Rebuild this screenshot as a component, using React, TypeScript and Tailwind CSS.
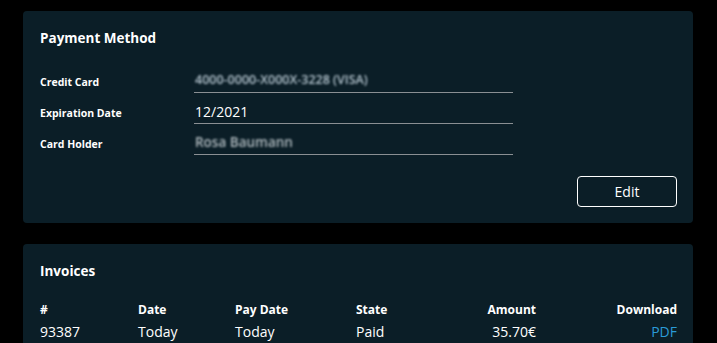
import React from "react";

const Row = ({ label, children }: { label: string; children: React.ReactNode }) => (
  <div className="flex items-center h-[24px]">
    <div className="w-[154px] text-[10.5px] font-bold text-white leading-none pt-[3px]">{label}</div>
    <div className="w-[319px] h-[24px] border-b border-[#8a8f93] flex items-center pl-[1px]">{children}</div>
  </div>
);

export default function App() {
  return (
    <div
      className="h-[343px] overflow-hidden w-full bg-black pt-[11px]"
      style={{ fontFamily: '"Open Sans", "Noto Sans", sans-serif' }}
    >
      <div className="ml-[23px] w-[670px] rounded-[4px] bg-[#0b1e27] pl-[17px] pr-[16px] pt-[17px] pb-[16px]">
        <div className="text-[13.5px] font-bold text-white leading-[20px]">Payment Method</div>
        <div className="mt-[21px] flex flex-col gap-[7px]">
          <Row label="Credit Card">
            <span className="text-[12.5px] font-semibold text-[#b4c4ce] blur-[1px]">4000-0000-X000X-3228 (VISA)</span>
          </Row>
          <Row label="Expiration Date">
            <span className="text-[14px] text-white">12/2021</span>
          </Row>
          <Row label="Card Holder">
            <span className="text-[13.5px] font-semibold text-[#b0babf] blur-[1px]">Rosa Baumann</span>
          </Row>
        </div>
        <div className="mt-[21px] flex justify-end">
          <button className="w-[100px] h-[31px] rounded-[4px] border border-white text-[14px] text-white bg-transparent">
            Edit
          </button>
        </div>
      </div>

      <div className="ml-[23px] mt-[21px] w-[670px] rounded-t-[4px] bg-[#0b1e27] pl-[17px] pr-[16px] pt-[17px] pb-[20px]">
        <div className="text-[13.5px] font-bold text-white leading-[20px]">Invoices</div>
        <div className="mt-[21px] flex text-[12px] font-bold text-white leading-[16px]">
          <div className="w-[98px]">#</div>
          <div className="w-[97px]">Date</div>
          <div className="w-[121px]">Pay Date</div>
          <div className="w-[80px]">State</div>
          <div className="w-[100px] text-right">Amount</div>
          <div className="w-[141px] text-right">Download</div>
        </div>
        <div className="mt-[4px] flex text-[14px] text-white leading-[20px]">
          <div className="w-[98px]">93387</div>
          <div className="w-[97px]">Today</div>
          <div className="w-[121px]">Today</div>
          <div className="w-[80px]">Paid</div>
          <div className="w-[100px] text-right">35.70€</div>
          <div className="w-[141px] text-right text-[#2a9bd8]">PDF</div>
        </div>
      </div>
    </div>
  );
}
